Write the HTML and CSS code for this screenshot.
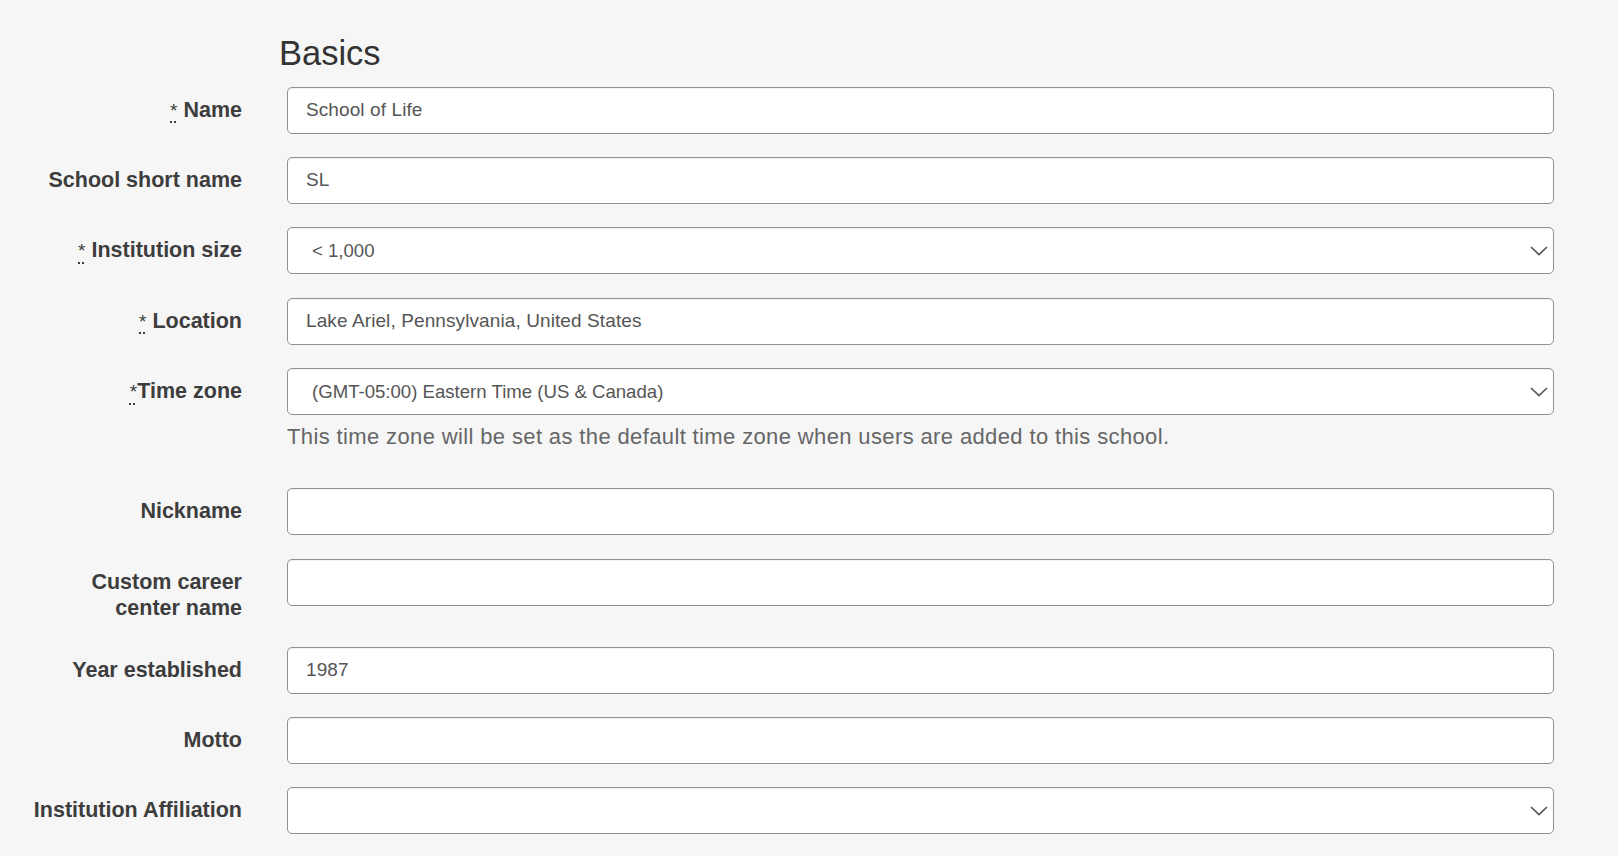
FILE: index.html
```html
<!DOCTYPE html>
<html lang="en">
<head>
<meta charset="utf-8">
<title>Basics</title>
<link rel="stylesheet" href="styles.css">
</head>
<body>
<main class="page">
  <h2 class="section-title">Basics</h2>
  <form class="form">
    <div class="row">
      <label class="label" for="name"><abbr class="req" title="required">*</abbr> Name</label>
      <div class="field"><input class="control" id="name" type="text" value="School of Life"></div>
    </div>
    <div class="row">
      <label class="label" for="short">School short name</label>
      <div class="field"><input class="control" id="short" type="text" value="SL"></div>
    </div>
    <div class="row">
      <label class="label" for="size"><abbr class="req" title="required">*</abbr> Institution size</label>
      <div class="field">
        <div class="select-wrap">
          <select class="control select" id="size"><option>&lt; 1,000</option></select>
          <svg class="chevron" width="18" height="10" viewBox="0 0 18 10"><path d="M1 1 L9 8.6 L17 1" fill="none" stroke="#555" stroke-width="1.7"/></svg>
        </div>
      </div>
    </div>
    <div class="row">
      <label class="label" for="loc"><abbr class="req" title="required">*</abbr> Location</label>
      <div class="field"><input class="control" id="loc" type="text" value="Lake Ariel, Pennsylvania, United States"></div>
    </div>
    <div class="row">
      <label class="label" for="tz"><abbr class="req" title="required">*</abbr>Time zone</label>
      <div class="field">
        <div class="select-wrap">
          <select class="control select" id="tz"><option>(GMT-05:00) Eastern Time (US &amp; Canada)</option></select>
          <svg class="chevron" width="18" height="10" viewBox="0 0 18 10"><path d="M1 1 L9 8.6 L17 1" fill="none" stroke="#555" stroke-width="1.7"/></svg>
        </div>
        <p class="hint">This time zone will be set as the default time zone when users are added to this school.</p>
      </div>
    </div>
    <div class="row">
      <label class="label" for="nick">Nickname</label>
      <div class="field"><input class="control" id="nick" type="text" value=""></div>
    </div>
    <div class="row">
      <label class="label" for="career">Custom career<br>center name</label>
      <div class="field"><input class="control" id="career" type="text" value=""></div>
    </div>
    <div class="row">
      <label class="label" for="year">Year established</label>
      <div class="field"><input class="control" id="year" type="text" value="1987"></div>
    </div>
    <div class="row">
      <label class="label" for="motto">Motto</label>
      <div class="field"><input class="control" id="motto" type="text" value=""></div>
    </div>
    <div class="row">
      <label class="label" for="aff">Institution Affiliation</label>
      <div class="field">
        <div class="select-wrap">
          <select class="control select" id="aff"><option></option></select>
          <svg class="chevron" width="18" height="10" viewBox="0 0 18 10"><path d="M1 1 L9 8.6 L17 1" fill="none" stroke="#555" stroke-width="1.7"/></svg>
        </div>
      </div>
    </div>
  </form>
</main>
</body>
</html>
```

FILE: styles.css
```css
html, body {
  margin: 0;
  padding: 0;
  background: #f6f6f6;
}

body {
  font-family: "Liberation Sans", Arial, sans-serif;
  color: #333;
  overflow: hidden;
}

.page {
  padding: 33px 64px 0 0;
}

.section-title {
  margin: 0 0 13.5px 279px;
  font-size: 34.5px;
  line-height: 40px;
  font-weight: normal;
  color: #333;
}

.form {
  display: flex;
  flex-direction: column;
  gap: 23.45px;
}

.row {
  display: grid;
  grid-template-columns: 242px 1fr;
  column-gap: 45px;
  align-items: start;
}

.label {
  text-align: right;
  font-size: 21.5px;
  line-height: 26.7px;
  font-weight: bold;
  color: #3d3d3d;
  padding: 10px 0 1px;
}

.req {
  font-weight: normal;
  font-size: 19px;
  text-decoration: underline dotted;
  text-decoration-thickness: 2px;
  text-underline-offset: 5px;
  cursor: help;
}

.field {
  min-width: 0;
}

.control {
  display: block;
  box-sizing: border-box;
  width: 100%;
  height: 47px;
  margin: 0;
  padding: 0 18px;
  border: 1px solid #929292;
  border-radius: 5px;
  background: #fff;
  box-shadow: inset 0 1px 1px rgba(0, 0, 0, 0.06);
  font-family: "Liberation Sans", Arial, sans-serif;
  font-size: 19px;
  letter-spacing: 0.1px;
  color: #555;
  outline: none;
}

.select-wrap {
  position: relative;
}

.select {
  -webkit-appearance: none;
  appearance: none;
  padding: 0 40px 0 24px;
  font-size: 18.6px;
  letter-spacing: 0;
}

.chevron {
  position: absolute;
  right: 6px;
  top: 19px;
  pointer-events: none;
}

.hint {
  margin: 8px 0 13.6px;
  font-size: 22px;
  line-height: 28px;
  letter-spacing: 0.37px;
  color: #666;
}
```
